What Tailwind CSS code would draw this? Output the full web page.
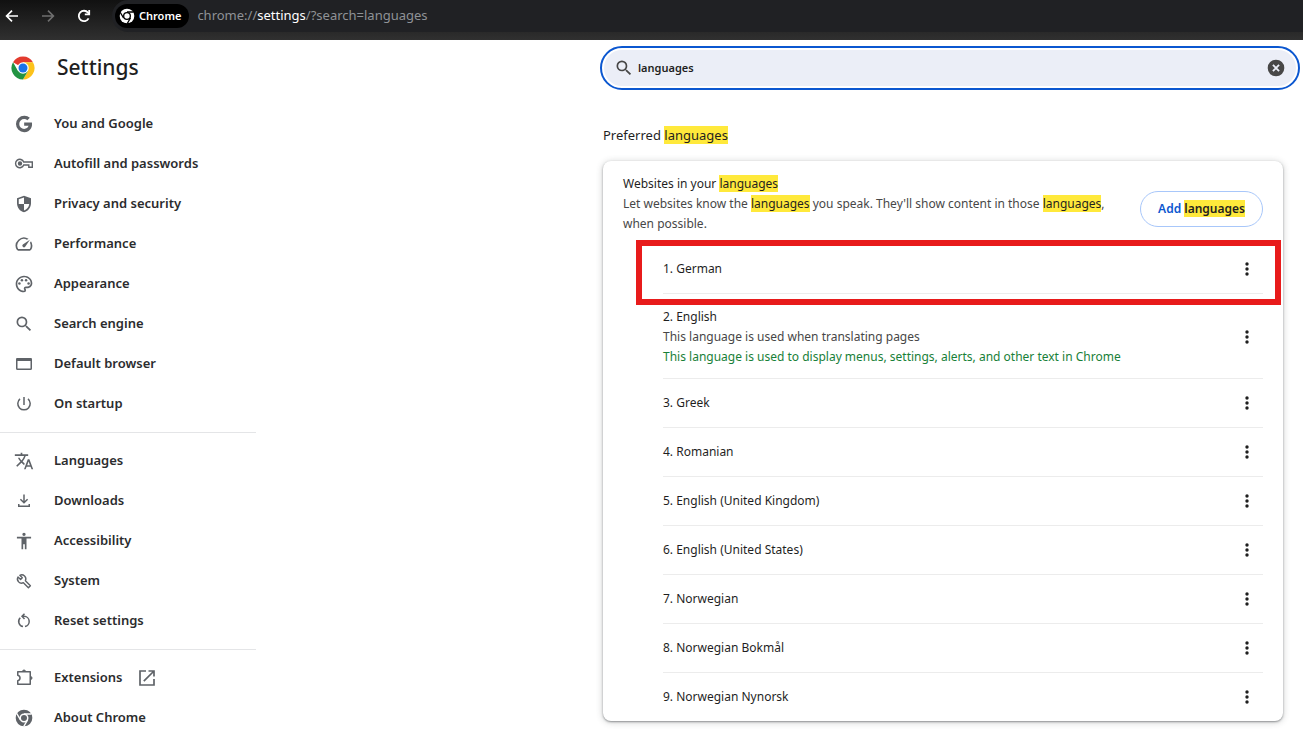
<!DOCTYPE html>
<html lang="en">
<head>
  <meta charset="UTF-8" />
  <meta name="viewport" content="width=device-width, initial-scale=1.0"/>
  <title>Settings</title>
  <script src="https://cdn.jsdelivr.net/npm/@tailwindcss/browser@4"></script>
</head>
<body class="flex h-screen flex-col overflow-hidden bg-white font-['Noto_Sans','Open_Sans',sans-serif] text-[#1f1f1f]">

  <!-- Browser toolbar -->
  <header class="flex h-10 shrink-0 items-start bg-linear-to-b from-[#111111] to-[#303030]">
    <div class="flex h-8 w-28 shrink-0 items-center gap-5 pl-1 text-white">
      <button aria-label="Back">
        <svg class="size-4" viewBox="0 0 16 16" fill="none" stroke="currentColor" stroke-width="1.7"><path d="M14 8H3M8 2.600 2.600 8 8 13.400"/></svg>
      </button>
      <button aria-label="Forward" class="text-[#6f6f6f]">
        <svg class="size-4" viewBox="0 0 16 16" fill="none" stroke="currentColor" stroke-width="1.6"><path d="M2 8h11M8 2.600 13.400 8 8 13.400"/></svg>
      </button>
      <button aria-label="Reload">
        <svg class="size-4" viewBox="0 0 16 16" fill="none" stroke="currentColor" stroke-width="1.8"><path d="M12.600 10.400A5.200 5.200 0 1 1 12 4.600l1 1.400"/><path d="M13.200 2v4.400H8.800"/></svg>
      </button>
    </div>
    <div class="flex h-8 flex-1 items-center gap-2 rounded-l-full bg-[#202124] pl-[3px]">
      <button class="flex h-6 items-center gap-1 rounded-full bg-black pr-2 pl-1 text-[11px] font-semibold text-white">
        <svg class="size-4" viewBox="0 0 24 24"><circle cx="12" cy="12" r="11" fill="#fff"/><circle cx="12" cy="12" r="5" fill="#fff" stroke="#000" stroke-width="2"/><path d="M12 6h10M6.800 15 1.800 6.400M17.200 15l-5 8.600" stroke="#000" stroke-width="2"/></svg>
        Chrome
      </button>
      <div class="text-[13px] text-[#8f9296]">chrome://<span class="text-white">settings</span>/?search=languages</div>
    </div>
  </header>

  <div class="flex flex-1 justify-between">

    <!-- Sidebar -->
    <aside class="w-64 shrink-0">
      <div class="flex h-14 items-center gap-[22px] pl-[11px]">
        <svg class="size-6" viewBox="0 0 48 48">
          <path d="M24 24 4.080 12.500A23 23 0 0 1 43.920 12.500H24z" fill="#e33b2e"/>
          <path d="M24 12.500h19.920A23 23 0 0 1 24 47l9.960-17.250z" fill="#fcc21b"/>
          <path d="M14.040 29.750 4.080 12.500A23 23 0 0 0 24 47l9.960-17.250z" fill="#229342"/>
          <circle cx="24" cy="24" r="11.500" fill="#fff"/><circle cx="24" cy="24" r="9" fill="#1a73e8"/>
        </svg>
        <h1 class="text-[21px] font-medium">Settings</h1>
      </div>
      <nav class="mt-2 text-[13px] font-semibold text-[#2b2c2e]">
        <a href="#" class="flex h-10 items-center gap-5 pl-[14px]">
          <svg class="size-5 fill-[#5f6368]" viewBox="0 0 24 24"><path d="M12.200 10.200v4h5.300c-.7 2.200-2.600 3.700-5.300 3.700a5.900 5.900 0 1 1 0-11.800c1.500 0 2.800.5 3.800 1.400l3-3A9.700 9.700 0 0 0 12.200 2.200a9.800 9.800 0 1 0 0 19.600c7.900 0 10.200-7 9.300-11.600z"/></svg>
          You and Google
        </a>
        <a href="#" class="flex h-10 items-center gap-5 pl-[14px]">
          <svg class="size-5" viewBox="0 0 20 20" fill="none" stroke="#5f6368" stroke-width="1.400"><path d="M9.700 8h8.600v5.200h-3.500v-2.200H9.700a4.200 4.200 0 1 1 0-3z"/><circle cx="6" cy="9.500" r="1.500" fill="#5f6368"/></svg>
          Autofill and passwords
        </a>
        <a href="#" class="flex h-10 items-center gap-5 pl-[14px]">
          <svg class="size-5 fill-[#5f6368]" viewBox="0 0 24 24"><path d="M12 2 3.600 5v6.090c0 5.050 3.600 9.760 8.400 10.910 4.800-1.150 8.400-5.860 8.400-10.910V5zM12 4.100V12h6.300c-.4 3.600-3 6.800-6.300 7.900V12H5.700V6.400z"/></svg>
          Privacy and security
        </a>
        <a href="#" class="flex h-10 items-center gap-5 pl-[14px]">
          <svg class="size-5 fill-[#5f6368]" viewBox="0 0 24 24"><path d="m20.380 8.570-1.230 1.850a8 8 0 0 1-.22 7.580H5.070A8 8 0 0 1 15.580 6.850l1.850-1.230A10 10 0 0 0 3.350 19a2 2 0 0 0 1.720 1h13.850a2 2 0 0 0 1.740-1 10 10 0 0 0-.27-10.440z"/><path d="M10.590 15.410a2 2 0 0 0 2.830 0l5.660-8.490-8.490 5.660a2 2 0 0 0 0 2.830z"/></svg>
          Performance
        </a>
        <a href="#" class="flex h-10 items-center gap-5 pl-[14px]">
          <svg class="size-5 fill-[#5f6368]" viewBox="0 0 24 24"><path d="M12 22C6.490 22 2 17.510 2 12S6.490 2 12 2s10 4.040 10 9c0 3.310-2.690 6-6 6h-1.770c-.28 0-.5.220-.5.500 0 .12.050.230.130.330.410.470.640 1.060.640 1.670A2.500 2.500 0 0 1 12 22zm0-18c-4.410 0-8 3.590-8 8s3.590 8 8 8c.28 0 .5-.22.500-.5a.54.54 0 0 0-.14-.35c-.41-.46-.63-1.050-.63-1.650a2.500 2.500 0 0 1 2.500-2.500H16c2.210 0 4-1.790 4-4 0-3.860-3.590-7-8-7z"/><circle cx="6.500" cy="11.500" r="1.500"/><circle cx="9.500" cy="7.500" r="1.500"/><circle cx="14.500" cy="7.500" r="1.500"/><circle cx="17.500" cy="11.500" r="1.500"/></svg>
          Appearance
        </a>
        <a href="#" class="flex h-10 items-center gap-5 pl-[14px]">
          <svg class="size-5 fill-[#5f6368]" viewBox="0 0 24 24"><path d="M15.500 14h-.79l-.28-.27A6.471 6.471 0 0 0 16 9.500 6.500 6.500 0 1 0 9.500 16c1.610 0 3.090-.59 4.230-1.570l.27.280v.790l5 4.990L20.490 19l-4.990-5zm-6 0C7.010 14 5 11.990 5 9.500S7.010 5 9.500 5 14 7.010 14 9.500 11.990 14 9.500 14z"/></svg>
          Search engine
        </a>
        <a href="#" class="flex h-10 items-center gap-5 pl-[14px]">
          <svg class="size-5" viewBox="0 0 20 20" fill="none" stroke="#5f6368"><rect x="2.750" y="4.750" width="14.500" height="10.500" rx=".8" stroke-width="1.500"/><path d="M2.500 5.500h15" stroke-width="3"/></svg>
          Default browser
        </a>
        <a href="#" class="flex h-10 items-center gap-5 pl-[14px]">
          <svg class="size-5" viewBox="0 0 20 20" fill="none" stroke="#5f6368" stroke-width="1.500"><path d="M10 3v8M6 4.900a6.200 6.200 0 1 0 8 0"/></svg>
          On startup
        </a>
        <hr class="my-2 border-[#e4e5e7]">
        <a href="#" class="flex h-10 items-center gap-5 pl-[14px]">
          <svg class="size-5 fill-[#5f6368]" viewBox="0 0 24 24"><path d="m12.870 15.070-2.540-2.510.03-.03A17.520 17.520 0 0 0 14.070 6H17V4h-7V2H8v2H1v1.990h11.170C11.500 7.920 10.440 9.750 9 11.350 8.070 10.320 7.300 9.190 6.690 8h-2c.73 1.630 1.730 3.170 2.980 4.560l-5.090 5.020L4 19l5-5 3.110 3.110.76-2.040zM18.500 10h-2L12 22h2l1.120-3h4.750L21 22h2l-4.500-12zm-2.620 7 1.620-4.330L19.120 17h-3.240z"/></svg>
          Languages
        </a>
        <a href="#" class="flex h-10 items-center gap-5 pl-[14px]">
          <svg class="size-5" viewBox="0 0 20 20" fill="none" stroke="#5f6368" stroke-width="1.500"><path d="M10 3.500v8M6.400 8.200 10 11.800l3.600-3.600M4.750 13v2.250h10.500V13"/></svg>
          Downloads
        </a>
        <a href="#" class="flex h-10 items-center gap-5 pl-[14px]">
          <svg class="size-5 fill-[#5f6368]" viewBox="0 0 24 24"><path d="M12 2a2 2 0 1 1 0 4 2 2 0 0 1 0-4zm8.500 7H15v13h-2v-6h-2v6H9V9H3.500V7h17v2z"/></svg>
          Accessibility
        </a>
        <a href="#" class="flex h-10 items-center gap-5 pl-[14px]">
          <svg class="size-5" viewBox="0 0 20 20" fill="none" stroke="#5f6368" stroke-width="1.400" stroke-linejoin="round"><path d="m16.400 14.700-5-5a4.100 4.100 0 0 0-5.600-5.400l2.500 2.500-1.700 1.700L4 6a4.100 4.100 0 0 0 5.400 5.700l5 5z"/></svg>
          System
        </a>
        <a href="#" class="flex h-10 items-center gap-5 pl-[14px]">
          <svg class="size-5" viewBox="0 0 20 20" fill="none" stroke="#5f6368" stroke-width="1.500"><path d="M6.300 6.700a5.200 5.200 0 0 0 2.700 8.900M8.500 5.300h1.600a5.200 5.200 0 0 1 .9 10.300M10.500 2.700 8 5.300l2.500 2.600"/></svg>
          Reset settings
        </a>
        <hr class="my-2 border-[#e4e5e7]">
        <a href="#" class="flex h-10 items-center gap-5 pl-[14px]">
          <svg class="size-5" viewBox="0 0 20 20" fill="none" stroke="#5f6368" stroke-width="1.500" stroke-linejoin="round"><path d="M3.750 3.750h12.500v12.500H3.750v-3.500a2.800 2.800 0 0 0 0-5.500z"/><path d="M8.500 3.500a1.500 1.500 0 0 1 3 0zM16.500 8.500a1.500 1.500 0 0 1 0 3z" fill="#5f6368" stroke-width="1"/></svg>
          Extensions
          <svg class="-ml-1.5 size-5" viewBox="0 0 20 20" fill="none" stroke="#5f6368" stroke-width="1.700"><path d="M9 3H3v14h14v-6M11.500 3H17v5.500M17 3 6.800 13.200"/></svg>
        </a>
        <a href="#" class="flex h-10 items-center gap-5 pl-[14px]">
          <svg class="size-5" viewBox="0 0 24 24"><circle cx="12" cy="12" r="10" fill="#5f6368"/><circle cx="12" cy="12" r="4.500" fill="#5f6368" stroke="#fff" stroke-width="1.800"/><path d="M12 7.200h9M7.800 14.400 3.300 6.600M16.200 14.400l-4.500 7.800" stroke="#fff" stroke-width="1.800"/></svg>
          About Chrome
        </a>
      </nav>
    </aside>

    <!-- Search results -->
    <main class="mr-[3px] w-[700px] shrink-0">
      <div class="flex h-14 items-center">
        <div class="w-full rounded-full border-2 border-[#0b57d0] p-[2px]">
          <div class="flex h-9 items-center rounded-full bg-[#ebeef7] px-[10px]">
            <svg class="size-5 shrink-0 fill-[#474747]" viewBox="0 0 24 24"><path d="M15.500 14h-.79l-.28-.27A6.471 6.471 0 0 0 16 9.500 6.500 6.500 0 1 0 9.500 16c1.610 0 3.090-.59 4.230-1.570l.27.280v.790l5 4.990L20.490 19l-4.990-5zm-6 0C7.010 14 5 11.990 5 9.500S7.010 5 9.500 5 14 7.010 14 9.500 11.990 14 9.500 14z"/></svg>
            <input type="text" aria-label="Search settings" value="languages" class="ml-1 min-w-0 flex-1 text-[11px] font-semibold outline-none">
            <button aria-label="Clear search">
              <svg class="size-5" viewBox="0 0 24 24"><circle cx="12" cy="12" r="10" fill="#474747"/><path d="m8.300 8.300 7.400 7.400M15.700 8.300l-7.400 7.400" stroke="#ebeef7" stroke-width="2.200"/></svg>
            </button>
          </div>
        </div>
      </div>

      <section class="mr-[17px] ml-[3px] pt-[29px]">
        <h2 class="text-[13px] leading-5">Preferred <mark class="bg-[#ffe93b] text-[#1f1f1f]">languages</mark></h2>
        <div class="mt-4 rounded-lg bg-white px-5 shadow-[0_1px_2px_rgba(60,64,67,0.5),0_1px_6px_1px_rgba(60,64,67,0.2)]">
          <div class="flex items-center pt-[13px] pb-[11px] text-xs leading-5">
            <div class="flex-1">
              <div>Websites in your <mark class="bg-[#ffe93b] text-[#1f1f1f]">languages</mark></div>
              <div class="text-[#474747]">Let websites know the <mark class="bg-[#ffe93b] text-[#1f1f1f]">languages</mark> you speak. They'll show content in those <mark class="bg-[#ffe93b] text-[#1f1f1f]">languages</mark>, when possible.</div>
            </div>
            <button class="mt-[10px] ml-6 h-9 rounded-full border border-[#a8c7fa] px-[17px] font-semibold text-[#0b57d0]">Add <mark class="bg-[#ffe93b] text-[#1f1f1f]">languages</mark></button>
          </div>

          <ol class="ml-10 divide-y divide-[#ececec] text-xs leading-5">
            <li class="relative flex h-[49px] items-center justify-between">
              1. German
              <button aria-label="More actions for German" class="flex w-8 justify-center"><svg class="size-5 fill-[#1f1f1f]" viewBox="0 0 20 20"><circle cx="10" cy="5" r="1.700"/><circle cx="10" cy="10" r="1.700"/><circle cx="10" cy="15" r="1.700"/></svg></button>
              <!-- Highlight frame -->
              <div class="pointer-events-none absolute -top-[5px] -right-[18px] -bottom-3 -left-[27px] border-6 border-[#e81b1b]"></div>
            </li>
            <li class="flex items-center justify-between pt-[13px] pb-[11px]">
              <div>
                <div>2. English</div>
                <div class="text-[#474747]">This language is used when translating pages</div>
                <div class="text-[#188038]">This language is used to display menus, settings, alerts, and other text in Chrome</div>
              </div>
              <button aria-label="More actions for English" class="flex w-8 justify-center"><svg class="size-5 fill-[#1f1f1f]" viewBox="0 0 20 20"><circle cx="10" cy="5" r="1.700"/><circle cx="10" cy="10" r="1.700"/><circle cx="10" cy="15" r="1.700"/></svg></button>
            </li>
            <li class="flex h-[49px] items-center justify-between">
              3. Greek
              <button aria-label="More actions for Greek" class="flex w-8 justify-center"><svg class="size-5 fill-[#1f1f1f]" viewBox="0 0 20 20"><circle cx="10" cy="5" r="1.700"/><circle cx="10" cy="10" r="1.700"/><circle cx="10" cy="15" r="1.700"/></svg></button>
            </li>
            <li class="flex h-[49px] items-center justify-between">
              4. Romanian
              <button aria-label="More actions for Romanian" class="flex w-8 justify-center"><svg class="size-5 fill-[#1f1f1f]" viewBox="0 0 20 20"><circle cx="10" cy="5" r="1.700"/><circle cx="10" cy="10" r="1.700"/><circle cx="10" cy="15" r="1.700"/></svg></button>
            </li>
            <li class="flex h-[49px] items-center justify-between">
              5. English (United Kingdom)
              <button aria-label="More actions for English (United Kingdom)" class="flex w-8 justify-center"><svg class="size-5 fill-[#1f1f1f]" viewBox="0 0 20 20"><circle cx="10" cy="5" r="1.700"/><circle cx="10" cy="10" r="1.700"/><circle cx="10" cy="15" r="1.700"/></svg></button>
            </li>
            <li class="flex h-[49px] items-center justify-between">
              6. English (United States)
              <button aria-label="More actions for English (United States)" class="flex w-8 justify-center"><svg class="size-5 fill-[#1f1f1f]" viewBox="0 0 20 20"><circle cx="10" cy="5" r="1.700"/><circle cx="10" cy="10" r="1.700"/><circle cx="10" cy="15" r="1.700"/></svg></button>
            </li>
            <li class="flex h-[49px] items-center justify-between">
              7. Norwegian
              <button aria-label="More actions for Norwegian" class="flex w-8 justify-center"><svg class="size-5 fill-[#1f1f1f]" viewBox="0 0 20 20"><circle cx="10" cy="5" r="1.700"/><circle cx="10" cy="10" r="1.700"/><circle cx="10" cy="15" r="1.700"/></svg></button>
            </li>
            <li class="flex h-[49px] items-center justify-between">
              8. Norwegian Bokmål
              <button aria-label="More actions for Norwegian Bokmål" class="flex w-8 justify-center"><svg class="size-5 fill-[#1f1f1f]" viewBox="0 0 20 20"><circle cx="10" cy="5" r="1.700"/><circle cx="10" cy="10" r="1.700"/><circle cx="10" cy="15" r="1.700"/></svg></button>
            </li>
            <li class="flex h-12 items-center justify-between">
              9. Norwegian Nynorsk
              <button aria-label="More actions for Norwegian Nynorsk" class="flex w-8 justify-center"><svg class="size-5 fill-[#1f1f1f]" viewBox="0 0 20 20"><circle cx="10" cy="5" r="1.700"/><circle cx="10" cy="10" r="1.700"/><circle cx="10" cy="15" r="1.700"/></svg></button>
            </li>
          </ol>
        </div>
      </section>
    </main>
  </div>
</body>
</html>
